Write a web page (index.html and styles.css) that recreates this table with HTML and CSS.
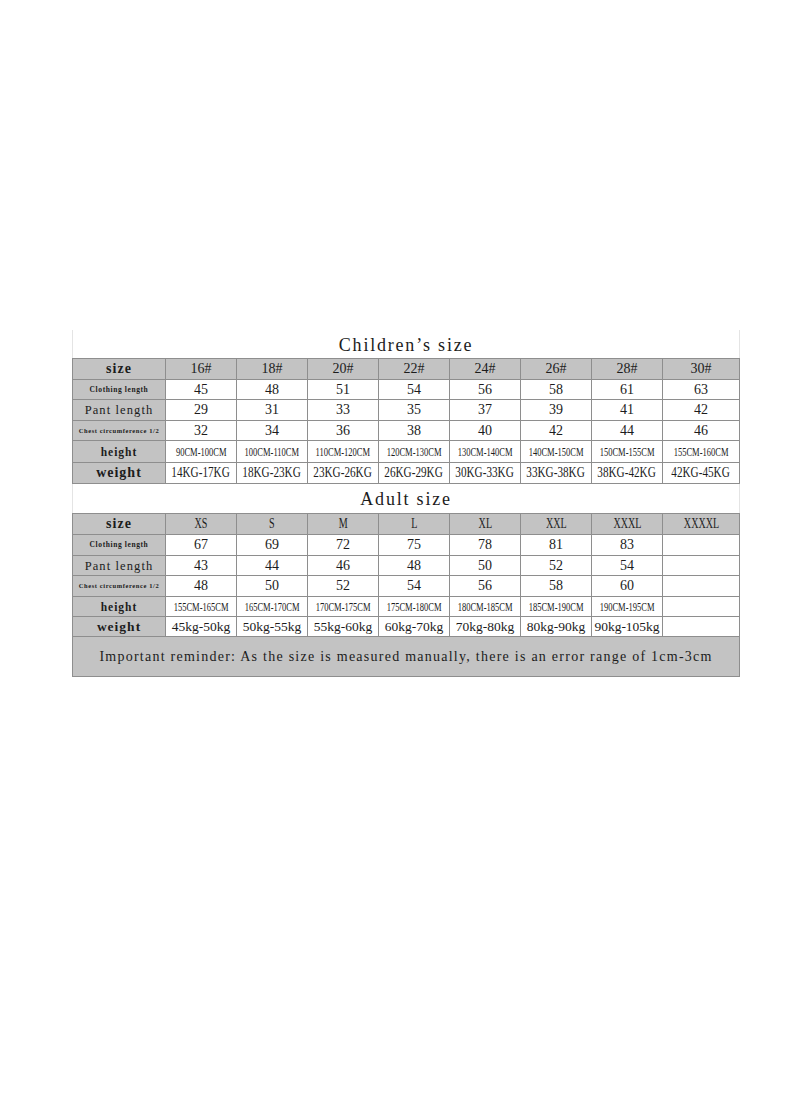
FILE: index.html
```html
<!DOCTYPE html>
<html lang="en">
<head>
<meta charset="utf-8">
<title>Size chart</title>
<link rel="stylesheet" href="styles.css">
</head>
<body>
<div class="page">
  <table class="chart">
    <colgroup>
      <col class="c-label">
      <col class="c-val"><col class="c-val"><col class="c-val"><col class="c-val">
      <col class="c-val"><col class="c-val"><col class="c-val">
      <col class="c-last">
    </colgroup>
    <tbody>
      <tr class="r-title1"><td class="title" colspan="9">Children’s size</td></tr>
      <tr class="r21 head">
        <td class="lab lab-big">size</td>
        <td>16#</td><td>18#</td><td>20#</td><td>22#</td><td>24#</td><td>26#</td><td>28#</td><td>30#</td>
      </tr>
      <tr class="r20">
        <td class="lab lab-xs">Clothing length</td>
        <td>45</td><td>48</td><td>51</td><td>54</td><td>56</td><td>58</td><td>61</td><td>63</td>
      </tr>
      <tr class="r21">
        <td class="lab lab-md">Pant length</td>
        <td>29</td><td>31</td><td>33</td><td>35</td><td>37</td><td>39</td><td>41</td><td>42</td>
      </tr>
      <tr class="r20">
        <td class="lab lab-xxs">Chest circumference 1/2</td>
        <td>32</td><td>34</td><td>36</td><td>38</td><td>40</td><td>42</td><td>44</td><td>46</td>
      </tr>
      <tr class="r22 rng">
        <td class="lab lab-big">height</td>
        <td><span>90CM-100CM</span></td><td><span>100CM-110CM</span></td><td><span>110CM-120CM</span></td><td><span>120CM-130CM</span></td>
        <td><span>130CM-140CM</span></td><td><span>140CM-150CM</span></td><td><span>150CM-155CM</span></td><td><span>155CM-160CM</span></td>
      </tr>
      <tr class="r21 kg">
        <td class="lab lab-big">weight</td>
        <td><span>14KG-17KG</span></td><td><span>18KG-23KG</span></td><td><span>23KG-26KG</span></td><td><span>26KG-29KG</span></td>
        <td><span>30KG-33KG</span></td><td><span>33KG-38KG</span></td><td><span>38KG-42KG</span></td><td><span>42KG-45KG</span></td>
      </tr>

      <tr class="r-title2"><td class="title" colspan="9">Adult size</td></tr>
      <tr class="r21 head letters">
        <td class="lab lab-big">size</td>
        <td><span>XS</span></td><td><span>S</span></td><td><span>M</span></td><td><span>L</span></td><td><span>XL</span></td><td><span>XXL</span></td><td><span>XXXL</span></td><td><span>XXXXL</span></td>
      </tr>
      <tr class="r21">
        <td class="lab lab-xs">Clothing length</td>
        <td>67</td><td>69</td><td>72</td><td>75</td><td>78</td><td>81</td><td>83</td><td></td>
      </tr>
      <tr class="r20">
        <td class="lab lab-md">Pant length</td>
        <td>43</td><td>44</td><td>46</td><td>48</td><td>50</td><td>52</td><td>54</td><td></td>
      </tr>
      <tr class="r21">
        <td class="lab lab-xxs">Chest circumference 1/2</td>
        <td>48</td><td>50</td><td>52</td><td>54</td><td>56</td><td>58</td><td>60</td><td></td>
      </tr>
      <tr class="r20 rng">
        <td class="lab lab-big">height</td>
        <td><span>155CM-165CM</span></td><td><span>165CM-170CM</span></td><td><span>170CM-175CM</span></td><td><span>175CM-180CM</span></td>
        <td><span>180CM-185CM</span></td><td><span>185CM-190CM</span></td><td><span>190CM-195CM</span></td><td></td>
      </tr>
      <tr class="r20 akg">
        <td class="lab lab-big">weight</td>
        <td>45kg-50kg</td><td>50kg-55kg</td><td>55kg-60kg</td><td>60kg-70kg</td>
        <td>70kg-80kg</td><td>80kg-90kg</td><td>90kg-105kg</td><td></td>
      </tr>
      <tr class="r-note">
        <td class="note" colspan="9">Important reminder: As the size is measured manually, there is an error range of 1cm-3cm</td>
      </tr>
    </tbody>
  </table>
</div>
</body>
</html>
```

FILE: styles.css
```css
html, body {
  margin: 0;
  padding: 0;
  background: #ffffff;
}

.page {
  padding: 330px 0 0 72px;
}

.chart {
  border-collapse: collapse;
  table-layout: fixed;
  width: 667px;
  color: #1c1c1c;
  font-family: "Liberation Serif", "Times New Roman", serif;
  font-size: 14px;
}

.c-label { width: 93px; }
.c-val { width: 71px; }
.c-last { width: 77px; }

.chart td {
  padding: 0;
  border: 1px solid #8e8e8e;
  text-align: center;
  vertical-align: middle;
  white-space: nowrap;
  overflow: visible;
  line-height: 12px;
  background: #ffffff;
}

/* row heights */
.r-title1 td { height: 27px; }
.r-title2 td { height: 28px; }
.r20 td { height: 19px; }
.r21 td { height: 20px; }
.r22 td { height: 21px; }
.r-note td { height: 39px; }

/* title rows */
.chart td.title {
  border-top: none;
  border-left: 1px solid #e4e4e4;
  border-right: 1px solid #e4e4e4;
  border-bottom: 1px solid #8e8e8e;
  font-size: 18px;
  letter-spacing: 1.8px;
  padding-top: 1px;
  line-height: 18px;
}

/* gray label column and header row */
.chart td.lab,
.head td,
.chart td.note {
  background: #c3c3c3;
}

.lab {
  font-family: "Liberation Serif", "Times New Roman", serif;
}
.lab-big { font-size: 15px; font-weight: bold; letter-spacing: 1px; }
.lab-md { font-size: 12.5px; letter-spacing: 1.1px; }
.lab-xs { font-size: 7.5px; font-weight: bold; letter-spacing: 0.6px; }
.lab-xxs { font-size: 6.5px; font-weight: bold; letter-spacing: 0.6px; }

.head td { font-size: 14px; }

/* condensed value text */
.rng span,
.kg span,
.letters span {
  display: inline-block;
  margin: 0 -30px;
  vertical-align: middle;
}
.rng td { font-size: 11.5px; }
.rng span { transform: scaleX(0.74); }
.kg td { font-size: 14px; }
.kg span { transform: scaleX(0.8); }
.akg td { font-size: 13.5px; }
.letters span { transform: scaleX(0.72); }

/* reminder */
.chart td.note {
  font-size: 14px;
  letter-spacing: 1.25px;
  line-height: 14px;
}
```
